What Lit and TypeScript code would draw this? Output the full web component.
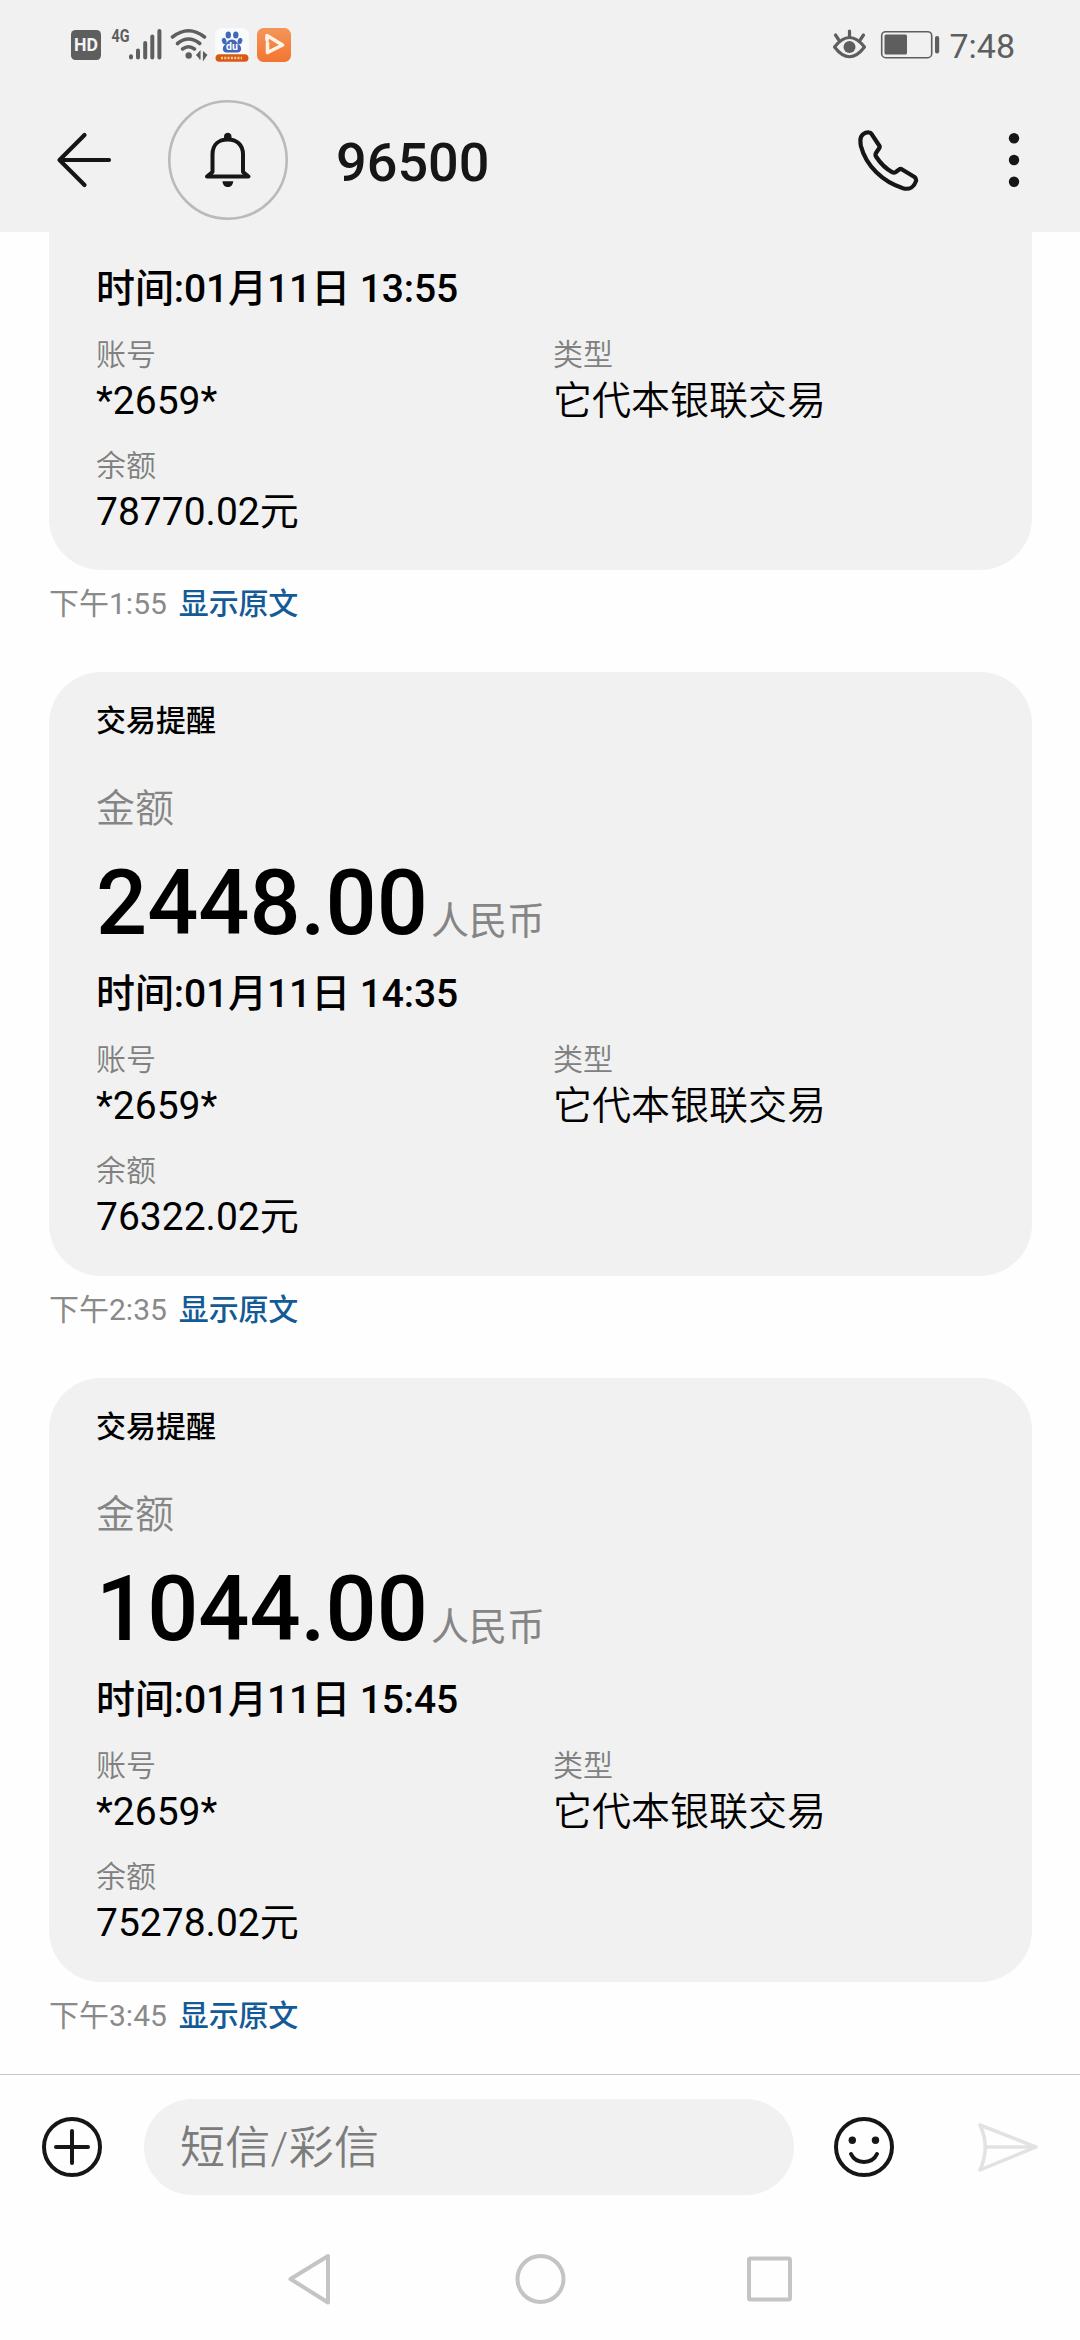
import { LitElement, html, css, svg, nothing } from "lit";
import { customElement, property } from "lit/decorators.js";

interface Notice {
  amount?: string;
  time: string;
  balance: string;
  sent: string;
}

const notices: Notice[] = [
  { time: "01月11日 13:55", balance: "78770.02元", sent: "下午1:55" },
  { amount: "2448.00", time: "01月11日 14:35", balance: "76322.02元", sent: "下午2:35" },
  { amount: "1044.00", time: "01月11日 15:45", balance: "75278.02元", sent: "下午3:45" },
];

@customElement("status-bar")
class StatusBar extends LitElement {
  static styles = css`
    :host {
      display: flex;
      justify-content: space-between;
      align-items: center;
      height: 90px;
      padding: 0 65px 0 71px;
      box-sizing: border-box;
      font-family: Roboto, "Noto Sans CJK SC", sans-serif;
      color: #5e5e5e;
    }
    .group {
      display: flex;
      align-items: center;
    }
    svg {
      display: block;
    }
    .clock {
      font-size: 34px;
      line-height: 40px;
      margin-left: 9px;
      padding-top: 1px;
    }
  `;

  render() {
    return html`
      <div class="group">
        <svg width="222" height="40" viewBox="71 25 222 40">
          <rect x="71" y="30" width="30" height="30" rx="4.5" fill="#5e5e5e" />
          <text x="86" y="51.2" text-anchor="middle" font-size="17.5" font-weight="700" fill="#f4f4f4" textLength="24" lengthAdjust="spacingAndGlyphs">HD</text>
          <text x="111.5" y="42.3" font-size="18.5" font-weight="700" fill="#5e5e5e" textLength="18" lengthAdjust="spacingAndGlyphs">4G</text>
          <g stroke="#5e5e5e" stroke-width="4" stroke-linecap="round">
            <path d="M131 56.2V57.4M138 50.5V57.4M145.2 43V57.4M152.3 36.5V57.4M159.4 31V57.4" />
          </g>
          <g fill="none" stroke="#5e5e5e" stroke-width="3.6" stroke-linecap="round">
            <path d="M172.5 37Q188.500 24.500 204.500 37" />
            <path d="M177.500 43.500Q188.500 34.500 199.800 43.500" />
            <path d="M182.500 49Q188.500 44.500 194.500 49" />
          </g>
          <circle cx="188.700" cy="55.500" r="3.200" fill="#5e5e5e" />
          <path d="M196.500 55.500L200 51.500V59.500M203.500 51.500V59.500L207 54.500" fill="#5e5e5e" stroke="#5e5e5e" stroke-width="1.200" />
          <rect x="215" y="28" width="34" height="34" rx="7" fill="#f9fafc" />
          <g fill="#4168b8">
            <ellipse cx="228.300" cy="35" rx="2.700" ry="3.600" />
            <ellipse cx="235.800" cy="35" rx="2.700" ry="3.600" />
            <ellipse cx="224.200" cy="41" rx="2.300" ry="3.200" transform="rotate(-15 224.200 41)" />
            <ellipse cx="240" cy="41" rx="2.300" ry="3.200" transform="rotate(15 240 41)" />
            <path d="M232 39.500C236 39.500 236.500 42.500 239 44.500C242.500 47.500 241.500 52.500 237.500 52.500H226.500C222.500 52.500 221.500 47.500 225 44.500C227.500 42.500 228 39.500 232 39.500Z" />
          </g>
          <text x="232" y="50.300" text-anchor="middle" font-size="10.500" font-weight="700" fill="#fff">du</text>
          <rect x="215.500" y="54.200" width="33" height="7.600" rx="3.800" fill="#d8590f" />
          <path d="M221 58H242" stroke="#f9c9a3" stroke-width="2.600" stroke-dasharray="2 1.300" />
          <linearGradient id="play" x1="0" y1="0" x2="0" y2="1">
            <stop offset="0" stop-color="#f4965a" />
            <stop offset="1" stop-color="#f27530" />
          </linearGradient>
          <rect x="257" y="28" width="34" height="34" rx="6.500" fill="url(#play)" />
          <path d="M267 40V35.500L282.500 45L267.500 52.500V43" fill="none" stroke="#fff4e6" stroke-width="3.600" stroke-linejoin="round" stroke-linecap="round" />
        </svg>
      </div>
      <div class="group">
        <svg width="108" height="40" viewBox="832 25 108 40">
          <g fill="none" stroke="#5e5e5e" stroke-width="3.200" stroke-linecap="round" stroke-linejoin="round">
            <path d="M834.500 47Q849.500 28 864.500 47Q849.500 66.500 834.500 47Z" />
            <path d="M849.500 31V36M835.500 35L838.500 39.500M863.500 35L860.500 39.500" />
          </g>
          <circle cx="849.500" cy="47" r="6" fill="#5e5e5e" />
          <rect x="881.700" y="31.700" width="50" height="26" rx="4" fill="none" stroke="#5e5e5e" stroke-width="1.600" />
          <rect x="884.500" y="34.500" width="22.500" height="20" rx="1.500" fill="#5e5e5e" />
          <rect x="935" y="36" width="4.200" height="17.500" rx="2" fill="#5e5e5e" />
        </svg>
        <div class="clock">7:48</div>
      </div>
    `;
  }
}

@customElement("chat-header")
class ChatHeader extends LitElement {
  static styles = css`
    :host {
      display: flex;
      align-items: center;
      height: 142px;
      padding: 0 56px 2px 54px;
      box-sizing: border-box;
      font-family: Roboto, "Noto Sans CJK SC", sans-serif;
      color: #161616;
    }
    svg {
      display: block;
      fill: none;
      stroke: #161616;
      stroke-linecap: round;
      stroke-linejoin: round;
    }
    .avatar {
      margin-left: 54px;
    }
    .title {
      flex: 1;
      margin-left: 48px;
      padding-top: 5px;
      font-size: 54px;
      line-height: 64px;
      font-weight: 500;
    }
    .more {
      margin-left: 85px;
    }
  `;

  render() {
    return html`
      <svg width="60" height="60" viewBox="0 0 60 60" stroke-width="4.200">
        <path d="M30.500 5L5.500 30L30.500 55M6 30H55" />
      </svg>
      <svg class="avatar" width="120" height="120" viewBox="0 0 120 120" stroke-width="4">
        <circle cx="60" cy="60" r="58.700" stroke="#bababa" stroke-width="2.600" />
        <path d="M44.500 72V54.500C44.500 44.500 51 39.500 59.800 39.500C68.500 39.500 75 44.500 75 54.500V72L80.500 76.500H39L44.500 72Z" />
        <path d="M56 38.500V36.500C56 31.500 63.500 31.500 63.500 36.500V38.500Z" fill="#161616" stroke="none" />
        <path d="M54.500 81.200H65.200C65 89 54.700 89 54.500 81.200Z" fill="#161616" stroke="none" />
      </svg>
      <div class="title">96500</div>
      <svg width="62" height="62" viewBox="0 0 62 62" stroke-width="4.200">
        <path d="M3.500 10.500C3.500 6 8 3 12 3.400Q13.500 3.500 14.300 4.700L22.500 17Q23 18 22.300 19L19 24Q18 25.600 19 27.500Q26 38.300 35.500 43.300Q37.200 44 38.800 43L42.500 40.300Q43.500 39.600 44.700 40.200L57.500 48Q59.500 49.500 59 52C57.500 57 53 61.200 46 59.200C26 53 9 37 3.900 17Q3.200 13.500 3.500 10.500Z" />
      </svg>
      <svg class="more" width="20" height="60" viewBox="0 0 20 60">
        <g fill="#161616" stroke="none">
          <circle cx="10" cy="8.200" r="5.200" />
          <circle cx="10" cy="30" r="5.200" />
          <circle cx="10" cy="51.800" r="5.200" />
        </g>
      </svg>
    `;
  }
}

@customElement("notice-message")
class NoticeMessage extends LitElement {
  @property({ attribute: false }) notice!: Notice;

  static styles = css`
    :host {
      display: block;
      font-family: Roboto, "Noto Sans CJK SC", sans-serif;
      color: #000;
    }
    .card {
      background: #f1f1f1;
      border-radius: 52px;
      padding: 31px 47px 36px;
    }
    .card.clipped {
      border-radius: 0 0 52px 52px;
      padding-top: 34px;
      padding-bottom: 35px;
    }
    .heading {
      font-size: 30px;
      line-height: 36px;
      font-weight: 450;
    }
    .amount-label {
      margin-top: 47px;
      font-size: 39px;
      line-height: 46px;
      color: #858585;
      font-weight: 350;
    }
    .amount {
      margin-top: 19px;
      margin-bottom: 14px;
      font-size: 90px;
      line-height: 106px;
      height: 106px;
      font-weight: 500;
    }
    .unit {
      margin-left: 3px;
      font-size: 38px;
      line-height: 46px;
      font-weight: 400;
      color: #858585;
    }
    .time {
      font-size: 39px;
      line-height: 46px;
      font-weight: 500;
      letter-spacing: -0.1px;
    }
    .fields {
      display: grid;
      grid-template-columns: 457px 1fr;
      row-gap: 24px;
      margin-top: 25px;
    }
    .label {
      font-size: 30px;
      line-height: 36px;
      font-weight: 350;
      color: #808080;
    }
    .value {
      margin-top: 5px;
      font-size: 39px;
      line-height: 46px;
    }
    .kind {
      font-weight: 350;
    }
    .meta {
      display: flex;
      gap: 12px;
      margin-top: 16px;
      font-size: 30px;
      line-height: 36px;
      color: #8a8a8a;
    }
    .source {
      color: #135a96;
      font-weight: 450;
      letter-spacing: -0.2px;
    }
  `;

  private field(label: string, value: string, kind = "") {
    return html`<div>
      <div class="label">${label}</div>
      <div class="value ${kind}">${value}</div>
    </div>`;
  }

  render() {
    const n = this.notice;
    return html`
      <div class="card ${n.amount ? "" : "clipped"}">
        ${n.amount
          ? html`<div class="heading">交易提醒</div>
              <div class="amount-label">金额</div>
              <div class="amount">${n.amount}<span class="unit">人民币</span></div>`
          : nothing}
        <div class="time">时间:${n.time}</div>
        <div class="fields">
          ${this.field("账号", "*2659*")} ${this.field("类型", "它代本银联交易", "kind")}
          ${this.field("余额", n.balance)}
        </div>
      </div>
      <div class="meta"><span>${n.sent}</span><span class="source">显示原文</span></div>
    `;
  }
}

@customElement("compose-bar")
class ComposeBar extends LitElement {
  static styles = css`
    :host {
      display: flex;
      align-items: center;
      height: 144px;
      padding: 0 40px 0 40px;
      box-sizing: border-box;
      border-top: 1px solid #c8c8c8;
      font-family: Roboto, "Noto Sans CJK SC", sans-serif;
    }
    svg {
      display: block;
      fill: none;
      stroke: #161616;
      stroke-width: 4;
      stroke-linecap: round;
      stroke-linejoin: round;
    }
    .field {
      width: 650px;
      height: 96px;
      box-sizing: border-box;
      margin-left: 40px;
      padding: 2px 36px 0;
      border-radius: 48px;
      background: #f1f1f1;
      color: #7c7c7c;
      font-size: 45px;
      line-height: 96px;
      font-weight: 350;
      letter-spacing: 0.3px;
    }
    .smile {
      margin-left: 38px;
    }
    .send {
      margin-left: 80px;
      stroke: #e2e2e2;
      stroke-width: 3.500;
    }
  `;

  render() {
    return html`
      <svg width="64" height="64" viewBox="0 0 64 64">
        <circle cx="32" cy="32" r="28" />
        <path d="M16 32H48M32 16V48" />
      </svg>
      <div class="field">短信/彩信</div>
      <svg class="smile" width="64" height="64" viewBox="0 0 64 64">
        <circle cx="32" cy="32" r="28" />
        <circle cx="20.300" cy="25.300" r="3.700" fill="#161616" stroke="none" />
        <circle cx="43.500" cy="25.300" r="3.700" fill="#161616" stroke="none" />
        <path d="M19 39C24 49.500 40 49.500 45 39" />
      </svg>
      <svg class="send" width="64" height="64" viewBox="0 0 64 64">
        <path d="M4 10L60 32L4 55Q14.500 32 4 10ZM10 32H60" />
      </svg>
    `;
  }
}

@customElement("nav-bar")
class NavBar extends LitElement {
  static styles = css`
    :host {
      display: flex;
      justify-content: space-between;
      align-items: center;
      height: 122px;
      padding: 0 282px 0 281px;
      box-sizing: border-box;
    }
    svg {
      display: block;
      fill: none;
      stroke: #c4c4c4;
      stroke-width: 4;
      stroke-linejoin: round;
    }
  `;

  render() {
    const shapes = [
      svg`<path d="M47 6V52.500L9.500 29Z" />`,
      svg`<circle cx="28.500" cy="29" r="23" />`,
      svg`<rect x="7" y="8.500" width="41" height="41" rx="1.500" />`,
    ];
    return shapes.map(
      (shape) => html`<svg width="56" height="58" viewBox="0 0 56 58">${shape}</svg>`,
    );
  }
}

@customElement("app-root")
class AppRoot extends LitElement {
  static styles = css`
    :host {
      display: flex;
      flex-direction: column;
      width: 1080px;
      height: 2340px;
      overflow: hidden;
      background: #fefefe;
    }
    .top {
      background: #f1f1f1;
    }
    .thread {
      flex: 1;
      min-height: 0;
      display: flex;
      flex-direction: column;
      gap: 50px;
      padding: 0 48px 0 49px;
    }
  `;

  render() {
    return html`
      <div class="top">
        <status-bar></status-bar>
        <chat-header></chat-header>
      </div>
      <div class="thread">
        ${notices.map((n) => html`<notice-message .notice=${n}></notice-message>`)}
      </div>
      <compose-bar></compose-bar>
      <nav-bar></nav-bar>
    `;
  }
}
